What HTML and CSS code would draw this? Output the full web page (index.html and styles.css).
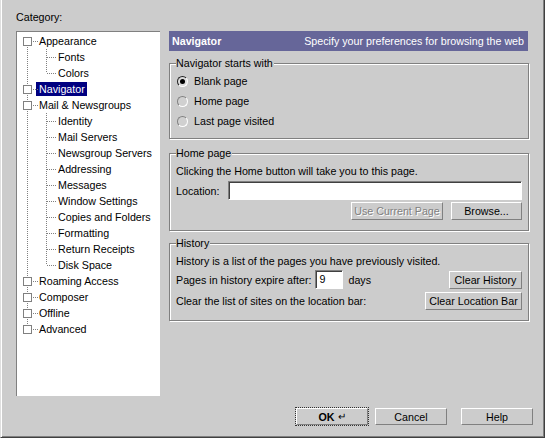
FILE: index.html
```html
<!DOCTYPE html>
<html>
<head>
<meta charset="utf-8">
<title>Preferences</title>
<link rel="stylesheet" href="styles.css">
</head>
<body>
<div class="window">
  <div class="main">
    <div class="sidebar">
      <div class="cat-label">Category:</div>
      <div class="tree">
        <div class="node top first"><span class="exp"></span><span class="lbl">Appearance</span></div>
        <div class="node child"><span class="lbl">Fonts</span></div>
        <div class="node child last"><span class="lbl">Colors</span></div>
        <div class="node top"><span class="exp"></span><span class="lbl sel">Navigator</span></div>
        <div class="node top"><span class="exp"></span><span class="lbl">Mail &amp; Newsgroups</span></div>
        <div class="node child"><span class="lbl">Identity</span></div>
        <div class="node child"><span class="lbl">Mail Servers</span></div>
        <div class="node child"><span class="lbl">Newsgroup Servers</span></div>
        <div class="node child"><span class="lbl">Addressing</span></div>
        <div class="node child"><span class="lbl">Messages</span></div>
        <div class="node child"><span class="lbl">Window Settings</span></div>
        <div class="node child"><span class="lbl">Copies and Folders</span></div>
        <div class="node child"><span class="lbl">Formatting</span></div>
        <div class="node child"><span class="lbl">Return Receipts</span></div>
        <div class="node child last"><span class="lbl">Disk Space</span></div>
        <div class="node top"><span class="exp"></span><span class="lbl">Roaming Access</span></div>
        <div class="node top"><span class="exp"></span><span class="lbl">Composer</span></div>
        <div class="node top"><span class="exp"></span><span class="lbl">Offline</span></div>
        <div class="node top last"><span class="exp"></span><span class="lbl">Advanced</span></div>
      </div>
    </div>
    <div class="panel">
      <div class="panel-head">
        <span class="ph-title">Navigator</span>
        <span class="ph-desc">Specify your preferences for browsing the web</span>
      </div>

      <fieldset class="group g-start">
        <legend>Navigator starts with</legend>
        <label class="radio-row"><span class="radio checked"></span>Blank page</label>
        <label class="radio-row"><span class="radio"></span>Home page</label>
        <label class="radio-row"><span class="radio"></span>Last page visited</label>
      </fieldset>

      <fieldset class="group g-home">
        <legend>Home page</legend>
        <div class="line">Clicking the Home button will take you to this page.</div>
        <div class="loc-row">
          <span class="loc-label">Location:</span>
          <span class="field loc-field"></span>
        </div>
        <div class="btn-row">
          <span class="btn disabled w-use">Use Current Page</span>
          <span class="btn w-browse">Browse...</span>
        </div>
      </fieldset>

      <fieldset class="group g-hist">
        <legend>History</legend>
        <div class="line">History is a list of the pages you have previously visited.</div>
        <div class="hist-row">
          <span>Pages in history expire after:</span>
          <span class="field days-field">9</span>
          <span class="days">days</span>
          <span class="spacer"></span>
          <span class="btn w-clearh">Clear History</span>
        </div>
        <div class="hist-row r2">
          <span>Clear the list of sites on the location bar:</span>
          <span class="spacer"></span>
          <span class="btn w-clearl">Clear Location Bar</span>
        </div>
      </fieldset>
    </div>
  </div>
  <div class="footer">
    <span class="btn w-foot default"><b>OK</b>&nbsp;<span class="enter">&#8629;</span></span>
    <span class="btn w-foot">Cancel</span>
    <span class="btn w-foot w-help">Help</span>
  </div>
</div>
</body>
</html>
```

FILE: styles.css
```css
* { box-sizing: border-box; }
html, body { margin: 0; padding: 0; background: #cccccc; }
body {
  font-family: "Liberation Sans", Arial, sans-serif;
  font-size: 10.7px;
  color: #000;
}
.window {
  width: 545px;
  height: 438px;
  background: #cccccc;
  border-left: 1px solid #dfdfdf;
  border-right: 1px solid #404040;
  border-bottom: 1px solid #404040;
  box-shadow: inset 1px 0 #ffffff, inset -1px -1px #808080;
  display: flex;
  flex-direction: column;
}
.main {
  display: flex;
  padding: 11px 0 0 15px;
}
.sidebar { width: 145px; }
.cat-label { height: 20px; line-height: 13px; padding-left: 0; }
.tree {
  height: 365px;
  width: 144px;
  background: #fff;
  border-left: 1px solid #808080;
  border-top: 1px solid #808080;
  padding-top: 1px;
}
.node {
  position: relative;
  height: 16px;
  display: flex;
  align-items: center;
  white-space: nowrap;
}
.node::before {
  content: "";
  position: absolute;
  left: 10px;
  top: 0;
  width: 1px;
  height: 16px;
  background-image: linear-gradient(to bottom, #808080 50%, transparent 50%);
  background-size: 1px 2px;
}
.node.top.first::before { top: 8px; height: 8px; }
.node.top.last::before { top: 0; height: 8px; }
.node::after {
  content: "";
  position: absolute;
  top: 8px;
  height: 1px;
  background-image: linear-gradient(to right, #808080 50%, transparent 50%);
  background-size: 2px 1px;
}
.node.top::after { left: 16px; width: 5px; }
.node.child::after { left: 30px; width: 9px; }
.node.child .lbl::before {
  content: "";
  position: absolute;
  left: 29px;
  top: 0;
  width: 1px;
  height: 16px;
  background-image: linear-gradient(to bottom, #808080 50%, transparent 50%);
  background-size: 1px 2px;
}
.node.child.last .lbl::before { height: 8px; }
.exp {
  width: 9px;
  height: 9px;
  margin-left: 6px;
  border: 1px solid #808080;
  background: #fff;
  position: relative;
  z-index: 1;
}
.lbl {
  line-height: 14px;
  height: 14px;
  padding: 0 2px 0 3px;
}
.node.top .lbl { margin-left: 4px; }
.node.child .lbl { margin-left: 38px; padding-left: 3px; }
.lbl.sel { background: #000080; color: #fff; }

.panel {
  width: 360px;
  margin-left: 8px;
  margin-top: 20px;
}
.panel-head {
  height: 20px;
  width: 359px;
  background: #666699;
  color: #fff;
  display: flex;
  align-items: center;
  justify-content: space-between;
  padding: 0 4px 0 3px;
}
.ph-title { font-weight: bold; }

.group {
  margin: 0;
  min-width: 0;
  padding: 0 6px 0 6px;
  border: 1px solid #808080;
  box-shadow: inset 1px 1px #ffffff, 1px 1px #ffffff;
}
.group legend {
  padding: 0 1px 0 0;
  margin-left: 0;
  line-height: 13px;
  background: #cccccc;
}
.g-start { margin-top: 6px; height: 82px; padding-top: 1px; }
.radio-row {
  display: flex;
  align-items: center;
  height: 20px;
}
.radio {
  width: 11px;
  height: 11px;
  border-radius: 50%;
  border: 1px solid;
  border-color: #808080 #ffffff #ffffff #808080;
  background: #d0d0d0;
  margin-left: 1px;
  margin-right: 6px;
  position: relative;
}
.radio.checked { border-color: #202020 #ffffff #ffffff #202020; background: #dcdcdc; }
.radio.checked::after {
  content: "";
  position: absolute;
  left: 2px;
  top: 2px;
  width: 5px;
  height: 5px;
  border-radius: 50%;
  background: #000;
}

.g-home { margin-top: 8px; height: 84px; padding-top: 4px; }
.line { height: 15px; line-height: 15px; }
.loc-row { display: flex; align-items: center; height: 23px; }
.loc-label { width: 52px; }
.field {
  background: #fff;
  border: 1px solid;
  border-color: #808080 #ffffff #ffffff #808080;
  box-shadow: inset 1px 1px #404040;
  display: inline-block;
}
.loc-field { width: 295px; height: 19px; }
.btn-row { display: flex; justify-content: flex-end; gap: 8px; padding-right: 0; margin-top: 0; }
.btn {
  display: inline-flex;
  align-items: center;
  justify-content: center;
  height: 18px;
  background: #cccccc;
  border: 1px solid;
  border-color: #ffffff #808080 #808080 #ffffff;
  white-space: nowrap;
}
.btn.disabled {
  color: #808080;
  text-shadow: 1px 1px #ffffff;
}
.w-use { width: 92px; }
.w-browse { width: 71px; }

.g-hist { margin-top: 6px; height: 84px; padding-top: 4px; }
.hist-row { display: flex; align-items: center; height: 21px; }
.days-field { width: 28px; height: 19px; margin-left: 4px; padding-left: 3px; line-height: 16px; }
.days { margin-left: 5px; }
.spacer { flex: 1; }
.w-clearh { width: 73px; }
.w-clearl { width: 97px; }

.footer {
  margin-top: auto;
  display: flex;
  justify-content: flex-end;
  padding: 0 11px 12px 0;
}
.w-foot { width: 72px; height: 17px; margin-left: 7px; }
.w-help { margin-left: 14px; }
.btn.default { outline: 1px dotted #333; outline-offset: 0; }
.enter { font-size: 10px; }
```
